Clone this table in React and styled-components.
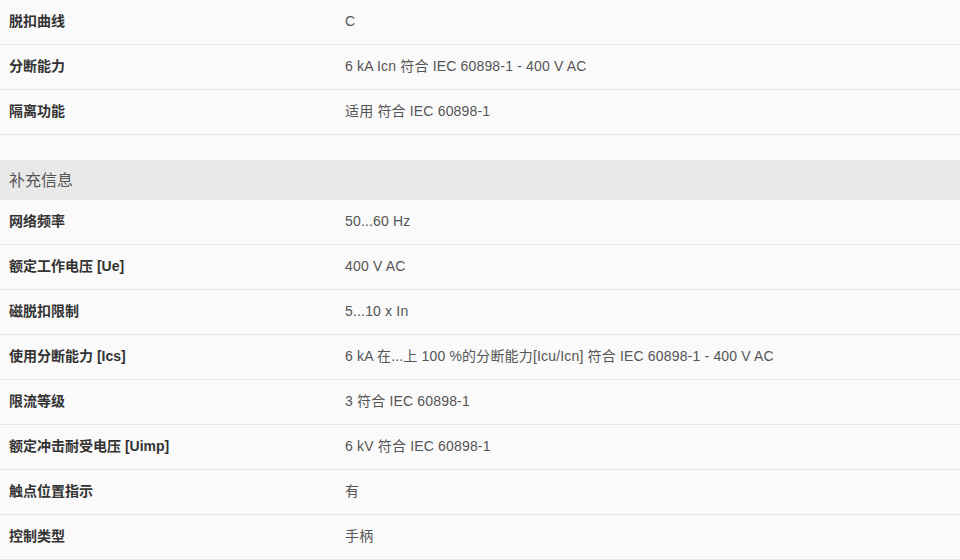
import styled, { createGlobalStyle } from "styled-components";

const GlobalStyle = createGlobalStyle`
  body {
    margin: 0;
    background: #fafafa;
    font-family: "Liberation Sans", "Noto Sans CJK SC", Arial, sans-serif;
    color: #333;
  }
`;

const Wrapper = styled.section`
  width: 960px;
`;

const Group = styled.div`
  & + & {
    margin-top: 25px;
  }
`;

const GroupTitle = styled.h3`
  margin: 0;
  height: 40px;
  box-sizing: border-box;
  display: flex;
  align-items: center;
  padding: 0 9px 3px;
  background: #e9e9e9;
  font-size: 16px;
  font-weight: normal;
  color: #555;
`;

const Row = styled.div`
  display: grid;
  grid-template-columns: 336px 1fr;
  align-items: center;
  height: 44px;
  box-sizing: content-box;
  padding: 0 9px;
  border-bottom: 1px solid #e6e6e6;
  font-size: 14px;
  line-height: 16px;
`;

const Label = styled.div`
  font-weight: bold;
  color: #333;
  margin-top: -2px;
`;

const Value = styled.div`
  color: #555;
  letter-spacing: 0.17px;
  margin-top: -2px;
`;

const basic = [
  ["脱扣曲线", "C"],
  ["分断能力", "6 kA Icn 符合 IEC 60898-1 - 400 V AC"],
  ["隔离功能", "适用 符合 IEC 60898-1"],
];

const extra = [
  ["网络频率", "50...60 Hz"],
  ["额定工作电压 [Ue]", "400 V AC"],
  ["磁脱扣限制", "5...10 x In"],
  ["使用分断能力 [Ics]", "6 kA 在...上 100 %的分断能力[Icu/Icn] 符合 IEC 60898-1 - 400 V AC"],
  ["限流等级", "3 符合 IEC 60898-1"],
  ["额定冲击耐受电压 [Uimp]", "6 kV 符合 IEC 60898-1"],
  ["触点位置指示", "有"],
  ["控制类型", "手柄"],
];

function SpecRows({ items }) {
  return items.map(([label, value]) => (
    <Row key={label}>
      <Label>{label}</Label>
      <Value>{value}</Value>
    </Row>
  ));
}

function App() {
  return (
    <Wrapper>
      <GlobalStyle />
      <Group>
        <SpecRows items={basic} />
      </Group>
      <Group>
        <GroupTitle>补充信息</GroupTitle>
        <SpecRows items={extra} />
      </Group>
    </Wrapper>
  );
}

export default App;
